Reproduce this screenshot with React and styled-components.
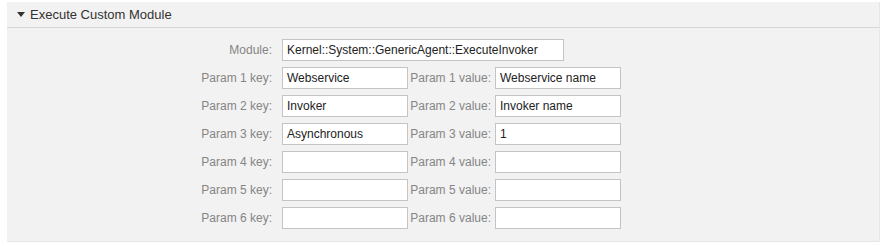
import styled, { createGlobalStyle } from 'styled-components';

const Global = createGlobalStyle`
  body {
    margin: 0;
    background: #fff;
    font-family: "Liberation Sans", Arial, sans-serif;
  }
`

const Panel = styled.section`
  margin: 2px 7px 0 7px;
  background: #f2f2f2;
  border-right: 1px solid #e6e6e6;
  border-bottom: 1px solid #e6e6e6;
  box-sizing: border-box;
`

const Header = styled.div`
  height: 25px;
  display: flex;
  align-items: center;
  padding-left: 10px;
  border-bottom: 1px solid #d6d6d6;
  font-size: 13px;
  color: #333;
  gap: 5px;
`

const Body = styled.div`
  padding: 11px 0 12px 0;
  display: flex;
  flex-direction: column;
  gap: 6px;
`

const Row = styled.div`
  display: flex;
  align-items: center;
  height: 22px;
`

const Label = styled.label`
  box-sizing: border-box;
  width: ${p => p.$width}px;
  padding-right: ${p => p.$pad}px;
  text-align: right;
  font-size: 12px;
  color: #858585;
  flex-shrink: 0;
  white-space: nowrap;
`

const Field = styled.div`
  width: ${p => p.$width}px;
  height: 22px;
  box-sizing: border-box;
  border: 1px solid #c4c4c4;
  background: #fff;
  font-size: 12px;
  color: #222;
  padding: 0 4px;
  display: flex;
  align-items: center;
  white-space: nowrap;
  overflow: hidden;
  flex-shrink: 0;
`

const params = [
  ["Webservice", "Webservice name"],
  ["Invoker", "Invoker name"],
  ["Asynchronous", "1"],
  ["", ""],
  ["", ""],
  ["", ""],
]

function Arrow() {
  return (
    <svg width="8" height="5" viewBox="0 0 8 5">
      <polygon points="0,0 8,0 4,5" fill="#333" />
    </svg>
  )
}

export default function App() {
  return (
    <>
      <Global />
      <Panel>
        <Header>
          <Arrow />
          <span>Execute Custom Module</span>
        </Header>
        <Body>
          <Row>
            <Label $width={275} $pad={10}>Module:</Label>
            <Field $width={282}>Kernel::System::GenericAgent::ExecuteInvoker</Field>
          </Row>
          {params.map(([k, v], i) => (
            <Row key={i}>
              <Label $width={275} $pad={10}>Param {i + 1} key:</Label>
              <Field $width={126}>{k}</Field>
              <Label $width={87} $pad={4}>Param {i + 1} value:</Label>
              <Field $width={126}>{v}</Field>
            </Row>
          ))}
        </Body>
      </Panel>
    </>
  )
}
